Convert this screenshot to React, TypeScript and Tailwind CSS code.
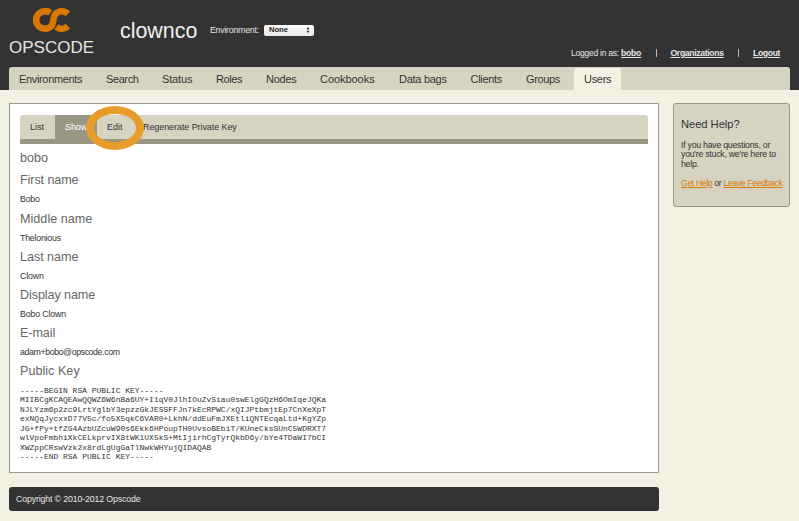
import React from "react";

const navItems = [
  { label: "Environments", cls: "w-[87px] tracking-[-0.34px]" },
  { label: "Search", cls: "w-[56px] tracking-[-0.4px]" },
  { label: "Status", cls: "w-[54px] tracking-[-0.15px]" },
  { label: "Roles", cls: "w-[50px] tracking-[-0.4px]" },
  { label: "Nodes", cls: "w-[54px] tracking-[-0.25px]" },
  { label: "Cookbooks", cls: "w-[79px] tracking-[-0.05px]" },
  { label: "Data bags", cls: "w-[71.5px] tracking-[-0.28px]" },
  { label: "Clients", cls: "w-[55.5px] tracking-[-0.3px]" },
  { label: "Groups", cls: "w-[48px] tracking-[-0.38px]" },
];

const fields = [
  { label: "First name", value: "Bobo", labelCls: "tracking-[-0.1px]", valueCls: "tracking-[-0.2px]" },
  { label: "Middle name", value: "Thelonious", labelCls: "tracking-[0.02px]", valueCls: "tracking-[-0.22px]" },
  { label: "Last name", value: "Clown", labelCls: "tracking-[-0.04px]", valueCls: "tracking-[-0.12px]" },
  { label: "Display name", value: "Bobo Clown", labelCls: "tracking-[-0.1px]", valueCls: "tracking-[-0.15px]" },
  { label: "E-mail", value: "adam+bobo@opscode.com", labelCls: "tracking-[-0.1px]", valueCls: "tracking-[-0.4px]" },
];

const publicKey = `-----BEGIN RSA PUBLIC KEY-----
MIIBCgKCAQEAwQQWZ6W6nBa6UY+I1qV0JlhIOuZvSiau0swElgGQzH6OmIqeJQKa
NJLYzm6p2zc9LrtYglbY3epzzGkJESSFFJn7kEcRPWC/xQIJPtbmjtEp7CnXeXpT
exNQqJycxxD77V5c/fo5X5qkC6VAR0+LkhN/ddEuFmJXEtliQNTEcqaLtd+KgYZp
JG+fPy+tfZG4AzbUZcuW90s6Ekk6HPoupTH0UvsoBEbiT/KUneCksSUnC5WDRXT7
wlVpoFmbhiXkCELkprvIX8tWK1UX5kS+MtIjirhCgTyrQkbD6y/bYe4TDaWI7bCI
XWZppCRswVzk2x8rdLgUgGaTlNwkWHYujQIDAQAB
-----END RSA PUBLIC KEY-----`;

function Logo() {
  return (
    <div className="ml-[9px] w-[90px] pt-[7px]">
      <svg className="ml-[23px] block" width="42" height="26" viewBox="0 0 42 26" fill="none" stroke="#d87800" strokeWidth="6.6">
        <path d="M18.2 5.9 A8.8 8.8 0 1 0 19.2 19.2 C22.4 16 20.2 10 23.6 6.8 A8.8 8.8 0 0 1 36 6.8" />
        <path d="M24.4 19.9 A8.8 8.8 0 0 0 36 19.2" />
      </svg>
      <div className="mt-[5px] text-[17px] leading-[20px] text-[#e4e4e0]">OPSCODE</div>
    </div>
  );
}

export default function App() {
  return (
    <div className="h-[521px] w-[799px] overflow-hidden bg-[#f3f1e3] font-['Liberation_Sans',Arial,sans-serif] text-[8.8px] text-[#333]">
      <header className="flex h-[90px] flex-col bg-[#333]">
        <div className="flex h-[67px] text-[#e6e6e6]">
          <Logo />
          <h1 className="ml-[21px] w-[90px] pt-[19px] text-[21.4px] leading-[25px] text-[#f0f0f0]">clownco</h1>
          <div className="flex h-[12px] items-center pt-[24px] box-content">
            <span className="w-[54px] whitespace-nowrap pt-px tracking-[-0.25px]">Environment:</span>
            <button className="flex h-[11px] w-[50px] items-center justify-between rounded-[2px] bg-linear-to-b from-white to-[#e8e8e8] pl-[5px] pr-[4px] text-[7.6px] font-bold leading-none text-[#222]">
              None
              <svg width="4" height="6" viewBox="0 0 4 6" fill="#333"><path d="M2 0L3.6 2.3H.4ZM2 6L.4 3.7H3.6Z" /></svg>
            </button>
          </div>
          <div className="ml-auto mr-[19px] flex h-[12px] items-center whitespace-nowrap pt-[47px] box-content text-[8.6px]">
            <span className="w-[70.5px] tracking-[-0.28px]">Logged in as: <b className="underline tracking-[-0.25px]">bobo</b></span>
            <i className="ml-[14px] mr-[14px] h-[8px] w-px bg-[#bbb]" />
            <b className="w-[53.5px] tracking-[-0.32px] underline">Organizations</b>
            <i className="ml-[14px] mr-[14px] h-[8px] w-px bg-[#bbb]" />
            <b className="w-[27px] tracking-[-0.33px] underline">Logout</b>
          </div>
        </div>
        <nav className="ml-[9px] flex h-[23px] w-[781px] rounded-t-[3px] bg-[#d6d4c1] pl-[10px] text-[11px] leading-[24px]">
          {navItems.map((n) => (
            <a key={n.label} className={`shrink-0 whitespace-nowrap ${n.cls}`}>{n.label}</a>
          ))}
          <a className="mt-px h-[22px] w-[47px] rounded-t-[3px] bg-[#f3f1e3] pl-[10px] leading-[22px] tracking-[-0.3px]">Users</a>
        </nav>
      </header>

      <div className="flex items-start pl-[9px] pt-[13px]">
        <div className="w-[650px]">
          <main className="h-[370px] border border-[#999] bg-white px-[10px] pt-[11px]">
            <div className="flex h-[29px] rounded-t-[3px] border-b-[5px] border-[#999683] bg-[#d6d4c1] text-[9px] leading-[25px]">
              <a className="w-[35px] pl-[10px]">List</a>
              <a className="h-[24px] w-[42px] bg-[#999683] pl-[10px] tracking-[-0.1px] text-white">Show</a>
              <a className="relative w-[46px] pl-[10px]">
                Edit
                <span className="absolute left-[-11px] top-[-9px] h-[44px] w-[58px] rounded-[50%] border-[8px] border-[#e79c2c]" />
              </a>
              <a className="whitespace-nowrap tracking-[-0.08px]">Regenerate Private Key</a>
            </div>
            <h2 className="mt-[3.4px] h-[22px] text-[12.6px] leading-[22px] text-[#666]">bobo</h2>
            {fields.map((f) => (
              <section key={f.label} className="h-[38.2px]">
                <h2 className={`h-[22px] text-[12.6px] leading-[22px] text-[#666] ${f.labelCls}`}>{f.label}</h2>
                <p className={`leading-[17.5px] ${f.valueCls}`}>{f.value}</p>
              </section>
            ))}
            <h2 className="h-[22px] text-[12.6px] leading-[22px] tracking-[0.02px] text-[#666]">Public Key</h2>
            <pre className="mt-[3.3px] font-['Liberation_Mono','Courier_New',monospace] text-[7.97px] leading-[9.55px]">{publicKey}</pre>
          </main>
          <footer className="mt-[14px] h-[24px] rounded-[3px] bg-[#333] pl-[7px] leading-[24px] tracking-[-0.15px] text-[#e6e6e6]">Copyright © 2010-2012 Opscode</footer>
        </div>
        <aside className="ml-[14px] h-[104px] w-[117px] rounded-[3px] border border-[#999683] bg-[#d6d4c1] pl-[7px] pt-[12px]">
          <h3 className="text-[11.2px] leading-[17px] tracking-[-0.05px]">Need Help?</h3>
          <p className="mt-[7.5px] whitespace-nowrap text-[8.8px] leading-[9.6px] tracking-[-0.27px]">
            If you have questions, or<br />you're stuck, we're here to<br />help.
          </p>
          <p className="mt-[8px] whitespace-nowrap text-[8.7px] leading-[13px] tracking-[-0.37px]">
            <a className="text-[#d87800] underline">Get Help</a> or <a className="text-[#d87800] underline">Leave Feedback</a>
          </p>
        </aside>
      </div>
    </div>
  );
}
